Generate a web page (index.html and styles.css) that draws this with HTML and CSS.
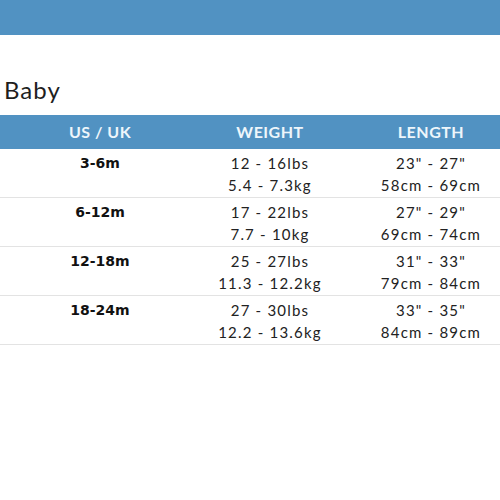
FILE: index.html
```html
<!DOCTYPE html>
<html>
<head>
<meta charset="utf-8">
<link rel="stylesheet" href="styles.css">
</head>
<body>
<div class="topbar"></div>
<h2 class="title">Baby</h2>
<div class="table">
  <div class="row head">
    <div class="cell">US / UK</div>
    <div class="cell">WEIGHT</div>
    <div class="cell">LENGTH</div>
  </div>
  <div class="row">
    <div class="cell size">3-6m</div>
    <div class="cell">12 - 16lbs<br>5.4 - 7.3kg</div>
    <div class="cell">23" - 27"<br>58cm - 69cm</div>
  </div>
  <div class="row">
    <div class="cell size">6-12m</div>
    <div class="cell">17 - 22lbs<br>7.7 - 10kg</div>
    <div class="cell">27" - 29"<br>69cm - 74cm</div>
  </div>
  <div class="row">
    <div class="cell size">12-18m</div>
    <div class="cell">25 - 27lbs<br>11.3 - 12.2kg</div>
    <div class="cell">31" - 33"<br>79cm - 84cm</div>
  </div>
  <div class="row">
    <div class="cell size">18-24m</div>
    <div class="cell">27 - 30lbs<br>12.2 - 13.6kg</div>
    <div class="cell">33" - 35"<br>84cm - 89cm</div>
  </div>
</div>
</body>
</html>
```
FILE: styles.css
```css
html, body {
  margin: 0;
  padding: 0;
  background: #ffffff;
  overflow: hidden;
}
body {
  width: 500px;
  height: 500px;
  font-family: Lato, "Liberation Sans", sans-serif;
  color: #222222;
}
.topbar {
  height: 35px;
  background: #5192c2;
}
.title {
  margin: 40px 0 10px 4px;
  font-weight: 400;
  font-size: 24px;
  line-height: 30px;
  letter-spacing: 1px;
  color: #1e1e1e;
}
.table {
  width: 522px;
}
.row {
  display: grid;
  grid-template-columns: 200px 140px 182px;
  border-bottom: 1px solid #e3e3e3;
  padding: 3px 0 1px;
  font-size: 15px;
  line-height: 22px;
  letter-spacing: 1.2px;
  text-align: center;
}
.row.head {
  background: #5192c2;
  color: #eef6fb;
  font-weight: 700;
  font-size: 16px;
  line-height: 34px;
  letter-spacing: 0.5px;
  padding: 0;
  border-bottom: 0;
}
.cell {
  white-space: nowrap;
}
.size {
  font-family: "DejaVu Sans", Verdana, sans-serif;
  font-weight: 700;
  font-size: 14px;
  letter-spacing: 0;
  color: #111111;
}
```
